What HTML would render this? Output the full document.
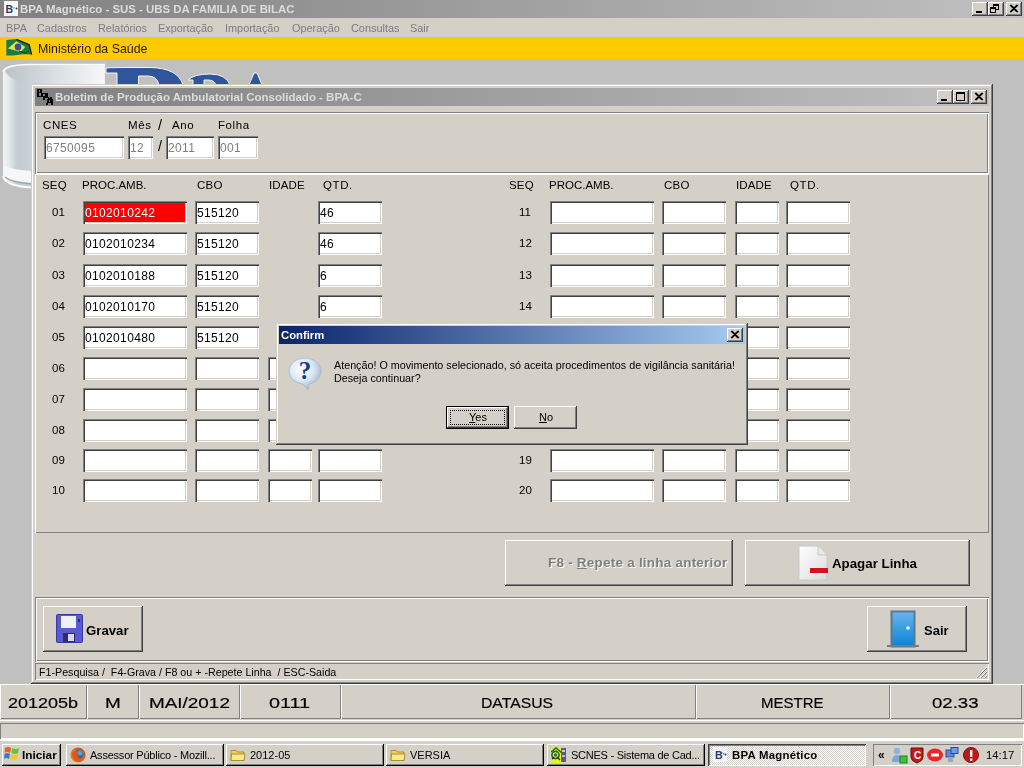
<!DOCTYPE html><html><head><meta charset="utf-8"><style>
*{box-sizing:border-box;margin:0;padding:0}
html,body{width:1024px;height:768px;overflow:hidden}
body{position:relative;background:#c0c0c0;font-family:"Liberation Sans",sans-serif;font-size:11px;color:#000}
.a{position:absolute}
.t{position:absolute;white-space:pre;line-height:1;will-change:transform}
.face{background:#d4d0c8}
.tb{background:linear-gradient(to right,#808080,#c0c0c0)}
.capbtn{position:absolute;width:16px;height:14px;background:#d4d0c8;
  box-shadow:inset -1px -1px 0 #404040, inset 1px 1px 0 #fff, inset -2px -2px 0 #808080, inset 2px 2px 0 #d4d0c8}
.edit{position:absolute;height:23px;background:#fff;
  box-shadow:inset 1px 1px 0 #808080, inset 2px 2px 0 #404040, inset -1px -1px 0 #fff, inset -2px -2px 0 #d4d0c8}
.edit span{position:absolute;left:2px;top:6px;font-size:12px;line-height:1;white-space:pre;letter-spacing:0.35px;will-change:transform}
.lbl{position:absolute;font-size:11.5px;line-height:1;white-space:pre}
.btn{position:absolute;background:#d4d0c8;
  box-shadow:inset -1px -1px 0 #404040, inset 1px 1px 0 #fff, inset -2px -2px 0 #808080}
.etch{position:absolute;box-shadow:inset 1px 1px 0 #808080, inset 2px 2px 0 #fff, inset -1px -1px 0 #fff, inset -2px -2px 0 #808080}
.raise{position:absolute;box-shadow:inset 1px 1px 0 #fff, inset -1px -1px 0 #808080}
.sunk{position:absolute;box-shadow:inset 1px 1px 0 #808080, inset -1px -1px 0 #fff}
</style></head><body>
<div class="a tb" style="left:0;top:0;width:1024px;height:18px"></div>
<svg class="a" style="left:4px;top:1px" width="15" height="16"><rect x="0" y="0" width="14" height="15" fill="#f6f8fb"/><text x="1.5" y="11.5" font-family="Liberation Sans" font-weight="bold" font-size="10.5" fill="#283c6c">B</text><rect x="7" y="5" width="1.2" height="2" fill="#4a5a80"/><rect x="9.5" y="6" width="1.2" height="1.5" fill="#7a8aa8"/><circle cx="12.5" cy="7.5" r="1" fill="#303c58"/></svg>
<div class="t" style="left:20px;top:3.96px;font-size:11.4px;font-weight:bold;color:#dcdcdc;">BPA Magnético - SUS - UBS DA FAMILIA DE BILAC</div>
<div class="capbtn" style="left:972px;top:2px"><div class="a" style="left:4px;top:9px;width:6px;height:2px;background:#000"></div></div>
<div class="capbtn" style="left:988px;top:2px"><div class="a" style="left:5px;top:2px;width:6px;height:6px;border:1px solid #000;border-top-width:2px"></div><div class="a" style="left:2px;top:5px;width:6px;height:6px;border:1px solid #000;border-top-width:2px;background:#d4d0c8"></div></div>
<div class="capbtn" style="left:1006px;top:2px"><svg class="a" style="left:0;top:0" width="16" height="14"><path d="M4 3L11 10M5 3L12 10M11 3L4 10M12 3L5 10" stroke="#000" stroke-width="1.1"/></svg></div>
<div class="a face" style="left:0;top:18px;width:1024px;height:19px"></div>
<div class="t" style="left:6px;top:22.72px;font-size:10.9px;color:#7c7c7c;">BPA</div>
<div class="t" style="left:37px;top:22.72px;font-size:10.9px;color:#7c7c7c;">Cadastros</div>
<div class="t" style="left:98px;top:22.72px;font-size:10.9px;color:#7c7c7c;">Relatórios</div>
<div class="t" style="left:158px;top:22.72px;font-size:10.9px;color:#7c7c7c;">Exportação</div>
<div class="t" style="left:225px;top:22.72px;font-size:10.9px;color:#7c7c7c;">Importação</div>
<div class="t" style="left:292px;top:22.72px;font-size:10.9px;color:#7c7c7c;">Operação</div>
<div class="t" style="left:351px;top:22.72px;font-size:10.9px;color:#7c7c7c;">Consultas</div>
<div class="t" style="left:410px;top:22.72px;font-size:10.9px;color:#7c7c7c;">Sair</div>
<div class="a" style="left:0;top:37px;width:1024px;height:22px;background:#fecb00"></div>
<div class="t" style="left:37.5px;top:43.14px;font-size:12.4px;color:#241a00;">Ministério da Saúde</div>
<svg class="a" style="left:0;top:59px" width="300" height="140"><defs><linearGradient id="cyl" x1="0" x2="1" y1="0" y2="0"><stop offset="0" stop-color="#f2f4f5"/><stop offset="0.06" stop-color="#e4e9ec"/><stop offset="0.14" stop-color="#c2ccd3"/><stop offset="0.3" stop-color="#c8d1d7"/><stop offset="1" stop-color="#eef1f3"/></linearGradient><linearGradient id="cylt" x1="0" x2="1"><stop offset="0" stop-color="#b9c3c9"/><stop offset="0.6" stop-color="#dfe4e7"/><stop offset="1" stop-color="#f6f7f8"/></linearGradient></defs><path d="M3 14 Q3 5 28 5 L105 5 L105 128 L30 127 Q4 126 3 118 Z" fill="url(#cyl)"/><path d="M5 12 Q7 7 28 7 L104 7 L104 40 Q60 34 30 26 Q8 20 5 12Z" fill="url(#cylt)"/><path d="M3 13 Q4 6 28 5.5 L105 5.5" fill="none" stroke="#fafbfb" stroke-width="1.5"/><path d="M4 107 Q14 111 32 112 L105 116 L105 128 Q20 126 4 118 Z" fill="#f5f7f8"/><path d="M5 118 Q12 124 32 125 L105 127" fill="none" stroke="#9ea6aa" stroke-width="1.3"/><path d="M3 117 Q5 127 32 128.5 L105 130" fill="none" stroke="#fdfdfd" stroke-width="1.8"/><path d="M106 9 Q112 8.5 130 8.5 L150 8.5 Q178 9 183 26 L159 26 Q157 17 148 17 L138.5 17 L138.5 26 L117 26 L117 14 L106 14Z" fill="#2f559c" stroke="#f4f4f4" stroke-width="1"/><path d="M188 21 Q194 15 210 15 Q226 15 230 26 L216 26 Q214 21 208 21 L204 21 L204 26 L193 26 L193 21Z" fill="#2f559c" stroke="#f4f4f4" stroke-width="1"/><path d="M254 14 L257 14 L262 26 L249 26Z" fill="#2f559c" stroke="#f4f4f4" stroke-width="1"/></svg>
<div class="a face" style="left:31px;top:84px;width:962px;height:600px;box-shadow:inset -1px -1px 0 #404040, inset 1px 1px 0 #d4d0c8, inset -2px -2px 0 #808080, inset 2px 2px 0 #fff"></div>
<div class="a tb" style="left:35px;top:88px;width:954px;height:18px"></div>
<svg class="a" style="left:33px;top:86px" width="24" height="22" shape-rendering="crispEdges"><path d="M4 3h5v1h-5zM4 4h2v1h-2zM7 4h2v1h-2zM4 5h2v1h-2zM7 5h2v1h-2zM4 6h5v1h-5zM4 7h2v1h-2zM8 7h7v1h-7zM4 8h2v1h-2zM8 8h2v1h-2zM12 8h3v1h-3zM4 9h2v1h-2zM8 9h2v1h-2zM12 9h3v1h-3zM4 10h11v1h-11zM10 11h6v1h-6zM17 11h2v1h-2zM10 12h2v1h-2zM15 12h4v1h-4zM10 13h2v1h-2zM14 13h6v1h-6zM14 14h2v1h-2zM17 14h3v1h-3zM14 15h2v1h-2zM17 15h3v1h-3zM14 16h6v1h-6zM13 17h2v1h-2zM18 17h2v1h-2zM13 18h2v1h-2zM18 18h2v1h-2z" fill="#000"/></svg>
<div class="t" style="left:55px;top:91.65px;font-size:11.5px;font-weight:bold;color:#dcdcdc;">Boletim de Produção Ambulatorial Consolidado - BPA-C</div>
<div class="capbtn" style="left:937px;top:90px"><div class="a" style="left:4px;top:9px;width:6px;height:2px;background:#000"></div></div>
<div class="capbtn" style="left:953px;top:90px"><div class="a" style="left:3px;top:2px;width:9px;height:9px;border:1px solid #000;border-top-width:2px"></div></div>
<div class="capbtn" style="left:971px;top:90px"><svg class="a" style="left:0;top:0" width="16" height="14"><path d="M4 3L11 10M5 3L12 10M11 3L4 10M12 3L5 10" stroke="#000" stroke-width="1.1"/></svg></div>
<div class="etch" style="left:35px;top:112px;width:954px;height:62px"></div>
<div class="t" style="left:42.5px;top:119.65px;font-size:11.5px;color:#000;letter-spacing:0.6px">CNES</div>
<div class="t" style="left:127.5px;top:119.65px;font-size:11.5px;color:#000;letter-spacing:0.6px">Mês</div>
<div class="t" style="left:172px;top:119.65px;font-size:11.5px;color:#000;letter-spacing:0.6px">Ano</div>
<div class="t" style="left:218px;top:119.65px;font-size:11.5px;color:#000;letter-spacing:0.6px">Folha</div>
<div class="t" style="left:158px;top:118.30px;font-size:14.5px;color:#000;">/</div>
<div class="edit" style="left:44px;top:136px;width:80px;height:23px;"><span style="color:#808080">6750095</span></div>
<div class="edit" style="left:128px;top:136px;width:25px;height:23px;"><span style="color:#808080">12</span></div>
<div class="t" style="left:157.5px;top:139.30px;font-size:14.5px;color:#000;">/</div>
<div class="edit" style="left:166px;top:136px;width:48px;height:23px;"><span style="color:#808080">2011</span></div>
<div class="edit" style="left:218px;top:136px;width:40px;height:23px;"><span style="color:#808080">001</span></div>
<div class="raise" style="left:35px;top:174px;width:954px;height:359px"></div>
<div class="t" style="left:42px;top:180.15px;font-size:11.5px;color:#000;letter-spacing:0.2px">SEQ</div>
<div class="t" style="left:82px;top:180.15px;font-size:11.5px;color:#000;letter-spacing:0px">PROC.AMB.</div>
<div class="t" style="left:197px;top:180.15px;font-size:11.5px;color:#000;letter-spacing:0.3px">CBO</div>
<div class="t" style="left:269px;top:180.15px;font-size:11.5px;color:#000;letter-spacing:0.1px">IDADE</div>
<div class="t" style="left:322.5px;top:180.15px;font-size:11.5px;color:#000;letter-spacing:0.6px">QTD.</div>
<div class="t" style="left:509px;top:180.15px;font-size:11.5px;color:#000;letter-spacing:0.2px">SEQ</div>
<div class="t" style="left:549px;top:180.15px;font-size:11.5px;color:#000;letter-spacing:0px">PROC.AMB.</div>
<div class="t" style="left:664px;top:180.15px;font-size:11.5px;color:#000;letter-spacing:0.3px">CBO</div>
<div class="t" style="left:736px;top:180.15px;font-size:11.5px;color:#000;letter-spacing:0.1px">IDADE</div>
<div class="t" style="left:789.5px;top:180.15px;font-size:11.5px;color:#000;letter-spacing:0.6px">QTD.</div>
<div class="t" style="left:52px;top:206.65px;font-size:11.5px;color:#000;">01</div>
<div class="t" style="left:519px;top:206.65px;font-size:11.5px;color:#000;">11</div>
<div class="edit" style="left:83px;top:201px;width:104px;height:23px;background:#f00;"><span style="color:#fff">0102010242</span></div>
<div class="edit" style="left:195px;top:201px;width:64px;height:23px;"><span style="color:#000">515120</span></div>
<div class="edit" style="left:318px;top:201px;width:64px;height:23px;"><span style="color:#000">46</span></div>
<div class="edit" style="left:550px;top:201px;width:104px;height:23px;"></div>
<div class="edit" style="left:662px;top:201px;width:64px;height:23px;"></div>
<div class="edit" style="left:735px;top:201px;width:44px;height:23px;"></div>
<div class="edit" style="left:786px;top:201px;width:64px;height:23px;"></div>
<div class="t" style="left:52px;top:237.65px;font-size:11.5px;color:#000;">02</div>
<div class="t" style="left:519px;top:237.65px;font-size:11.5px;color:#000;">12</div>
<div class="edit" style="left:83px;top:232px;width:104px;height:23px;"><span style="color:#000">0102010234</span></div>
<div class="edit" style="left:195px;top:232px;width:64px;height:23px;"><span style="color:#000">515120</span></div>
<div class="edit" style="left:318px;top:232px;width:64px;height:23px;"><span style="color:#000">46</span></div>
<div class="edit" style="left:550px;top:232px;width:104px;height:23px;"></div>
<div class="edit" style="left:662px;top:232px;width:64px;height:23px;"></div>
<div class="edit" style="left:735px;top:232px;width:44px;height:23px;"></div>
<div class="edit" style="left:786px;top:232px;width:64px;height:23px;"></div>
<div class="t" style="left:52px;top:269.65px;font-size:11.5px;color:#000;">03</div>
<div class="t" style="left:519px;top:269.65px;font-size:11.5px;color:#000;">13</div>
<div class="edit" style="left:83px;top:264px;width:104px;height:23px;"><span style="color:#000">0102010188</span></div>
<div class="edit" style="left:195px;top:264px;width:64px;height:23px;"><span style="color:#000">515120</span></div>
<div class="edit" style="left:318px;top:264px;width:64px;height:23px;"><span style="color:#000">6</span></div>
<div class="edit" style="left:550px;top:264px;width:104px;height:23px;"></div>
<div class="edit" style="left:662px;top:264px;width:64px;height:23px;"></div>
<div class="edit" style="left:735px;top:264px;width:44px;height:23px;"></div>
<div class="edit" style="left:786px;top:264px;width:64px;height:23px;"></div>
<div class="t" style="left:52px;top:300.65px;font-size:11.5px;color:#000;">04</div>
<div class="t" style="left:519px;top:300.65px;font-size:11.5px;color:#000;">14</div>
<div class="edit" style="left:83px;top:295px;width:104px;height:23px;"><span style="color:#000">0102010170</span></div>
<div class="edit" style="left:195px;top:295px;width:64px;height:23px;"><span style="color:#000">515120</span></div>
<div class="edit" style="left:318px;top:295px;width:64px;height:23px;"><span style="color:#000">6</span></div>
<div class="edit" style="left:550px;top:295px;width:104px;height:23px;"></div>
<div class="edit" style="left:662px;top:295px;width:64px;height:23px;"></div>
<div class="edit" style="left:735px;top:295px;width:44px;height:23px;"></div>
<div class="edit" style="left:786px;top:295px;width:64px;height:23px;"></div>
<div class="t" style="left:52px;top:331.65px;font-size:11.5px;color:#000;">05</div>
<div class="t" style="left:519px;top:331.65px;font-size:11.5px;color:#000;">15</div>
<div class="edit" style="left:83px;top:326px;width:104px;height:23px;"><span style="color:#000">0102010480</span></div>
<div class="edit" style="left:195px;top:326px;width:64px;height:23px;"><span style="color:#000">515120</span></div>
<div class="edit" style="left:318px;top:326px;width:64px;height:23px;"></div>
<div class="edit" style="left:550px;top:326px;width:104px;height:23px;"></div>
<div class="edit" style="left:662px;top:326px;width:64px;height:23px;"></div>
<div class="edit" style="left:735px;top:326px;width:44px;height:23px;"></div>
<div class="edit" style="left:786px;top:326px;width:64px;height:23px;"></div>
<div class="t" style="left:52px;top:362.65px;font-size:11.5px;color:#000;">06</div>
<div class="t" style="left:519px;top:362.65px;font-size:11.5px;color:#000;">16</div>
<div class="edit" style="left:83px;top:357px;width:104px;height:23px;"></div>
<div class="edit" style="left:195px;top:357px;width:64px;height:23px;"></div>
<div class="edit" style="left:268px;top:357px;width:44px;height:23px;"></div>
<div class="edit" style="left:318px;top:357px;width:64px;height:23px;"></div>
<div class="edit" style="left:550px;top:357px;width:104px;height:23px;"></div>
<div class="edit" style="left:662px;top:357px;width:64px;height:23px;"></div>
<div class="edit" style="left:735px;top:357px;width:44px;height:23px;"></div>
<div class="edit" style="left:786px;top:357px;width:64px;height:23px;"></div>
<div class="t" style="left:52px;top:393.65px;font-size:11.5px;color:#000;">07</div>
<div class="t" style="left:519px;top:393.65px;font-size:11.5px;color:#000;">17</div>
<div class="edit" style="left:83px;top:388px;width:104px;height:23px;"></div>
<div class="edit" style="left:195px;top:388px;width:64px;height:23px;"></div>
<div class="edit" style="left:268px;top:388px;width:44px;height:23px;"></div>
<div class="edit" style="left:318px;top:388px;width:64px;height:23px;"></div>
<div class="edit" style="left:550px;top:388px;width:104px;height:23px;"></div>
<div class="edit" style="left:662px;top:388px;width:64px;height:23px;"></div>
<div class="edit" style="left:735px;top:388px;width:44px;height:23px;"></div>
<div class="edit" style="left:786px;top:388px;width:64px;height:23px;"></div>
<div class="t" style="left:52px;top:424.65px;font-size:11.5px;color:#000;">08</div>
<div class="t" style="left:519px;top:424.65px;font-size:11.5px;color:#000;">18</div>
<div class="edit" style="left:83px;top:419px;width:104px;height:23px;"></div>
<div class="edit" style="left:195px;top:419px;width:64px;height:23px;"></div>
<div class="edit" style="left:268px;top:419px;width:44px;height:23px;"></div>
<div class="edit" style="left:318px;top:419px;width:64px;height:23px;"></div>
<div class="edit" style="left:550px;top:419px;width:104px;height:23px;"></div>
<div class="edit" style="left:662px;top:419px;width:64px;height:23px;"></div>
<div class="edit" style="left:735px;top:419px;width:44px;height:23px;"></div>
<div class="edit" style="left:786px;top:419px;width:64px;height:23px;"></div>
<div class="t" style="left:52px;top:454.65px;font-size:11.5px;color:#000;">09</div>
<div class="t" style="left:519px;top:454.65px;font-size:11.5px;color:#000;">19</div>
<div class="edit" style="left:83px;top:449px;width:104px;height:23px;"></div>
<div class="edit" style="left:195px;top:449px;width:64px;height:23px;"></div>
<div class="edit" style="left:268px;top:449px;width:44px;height:23px;"></div>
<div class="edit" style="left:318px;top:449px;width:64px;height:23px;"></div>
<div class="edit" style="left:550px;top:449px;width:104px;height:23px;"></div>
<div class="edit" style="left:662px;top:449px;width:64px;height:23px;"></div>
<div class="edit" style="left:735px;top:449px;width:44px;height:23px;"></div>
<div class="edit" style="left:786px;top:449px;width:64px;height:23px;"></div>
<div class="t" style="left:52px;top:484.65px;font-size:11.5px;color:#000;">10</div>
<div class="t" style="left:519px;top:484.65px;font-size:11.5px;color:#000;">20</div>
<div class="edit" style="left:83px;top:479px;width:104px;height:23px;"></div>
<div class="edit" style="left:195px;top:479px;width:64px;height:23px;"></div>
<div class="edit" style="left:268px;top:479px;width:44px;height:23px;"></div>
<div class="edit" style="left:318px;top:479px;width:64px;height:23px;"></div>
<div class="edit" style="left:550px;top:479px;width:104px;height:23px;"></div>
<div class="edit" style="left:662px;top:479px;width:64px;height:23px;"></div>
<div class="edit" style="left:735px;top:479px;width:44px;height:23px;"></div>
<div class="edit" style="left:786px;top:479px;width:64px;height:23px;"></div>
<div class="btn" style="left:505px;top:540px;width:228px;height:46px"></div>
<div class="t" style="left:549px;top:557.41px;font-size:13.5px;font-weight:bold;color:#fff;letter-spacing:0.22px">F8 - Repete a linha anterior</div>
<div class="t" style="left:548px;top:556.41px;font-size:13.5px;font-weight:bold;color:#808080;letter-spacing:0.22px">F8 - <u>R</u>epete a linha anterior</div>
<div class="btn" style="left:745px;top:540px;width:225px;height:46px"></div>
<svg class="a" style="left:797px;top:545px" width="32" height="37"><defs><linearGradient id="doc" x1="0" y1="0" x2="1" y2="1"><stop offset="0" stop-color="#ffffff"/><stop offset="1" stop-color="#dcdcdc"/></linearGradient></defs><path d="M2 1 L21 1 L30 10 L30 35 L2 35 Z" fill="url(#doc)" stroke="#c8c8c8" stroke-width="1"/><path d="M21 1 L21 10 L30 10" fill="#e8e8e8" stroke="#c8c8c8"/><rect x="13" y="23" width="18" height="5" fill="#d2141c"/></svg>
<div class="t" style="left:832px;top:556.94px;font-size:13.3px;font-weight:bold;color:#000;">Apagar Linha</div>
<div class="etch" style="left:35px;top:597px;width:954px;height:65px"></div>
<div class="btn" style="left:43px;top:606px;width:100px;height:46px"></div>
<svg class="a" style="left:56px;top:614px" width="27" height="29"><rect x="0.5" y="0.5" width="26" height="28" rx="1" fill="#5a5ad0" stroke="#3838a0"/><rect x="5" y="2" width="15" height="12" fill="#f0f0fa"/><rect x="7" y="19" width="12" height="9" fill="#2c2c70"/><rect x="12" y="20" width="6" height="7" fill="#d8d8e8"/><rect x="22" y="5" width="2" height="3" fill="#2c2c70"/></svg>
<div class="t" style="left:86px;top:623.95px;font-size:13.2px;font-weight:bold;color:#000;">Gravar</div>
<div class="btn" style="left:867px;top:606px;width:100px;height:46px"></div>
<svg class="a" style="left:886px;top:610px" width="34" height="38"><defs><linearGradient id="door" x1="0" y1="0" x2="0" y2="1"><stop offset="0" stop-color="#6ab4ec"/><stop offset="1" stop-color="#0a84d8"/></linearGradient></defs><rect x="5.5" y="1.5" width="23" height="35" fill="url(#door)" stroke="#5c7890" stroke-width="2"/><rect x="1" y="35" width="32" height="2" fill="#6c7c88"/><circle cx="22" cy="18" r="1.8" fill="#e8f4ff"/></svg>
<div class="t" style="left:924px;top:623.97px;font-size:13px;font-weight:bold;color:#000;">Sair</div>
<div class="sunk" style="left:35px;top:663px;width:954px;height:17px"></div>
<div class="t" style="left:39px;top:667.04px;font-size:10.7px;color:#000;">F1-Pesquisa /  F4-Grava / F8 ou + -Repete Linha  / ESC-Saida</div>
<svg class="a" style="left:975px;top:666px" width="13" height="13"><path d="M12 1L1 12M12 5L5 12M12 9L9 12" stroke="#fff" stroke-width="1"/><path d="M12 2L2 12M12 6L6 12M12 10L10 12" stroke="#808080" stroke-width="1"/></svg>
<div class="a face" style="left:276px;top:323px;width:472px;height:122px;box-shadow:inset -1px -1px 0 #404040, inset 1px 1px 0 #d4d0c8, inset -2px -2px 0 #808080, inset 2px 2px 0 #fff"></div>
<div class="a" style="left:279px;top:326px;width:466px;height:18px;background:linear-gradient(to right,#0a246a,#a6caf0)"></div>
<div class="t" style="left:281px;top:329.87px;font-size:11.3px;font-weight:bold;color:#fff;">Confirm</div>
<div class="capbtn" style="left:727px;top:328px"><svg class="a" style="left:0;top:0" width="16" height="14"><path d="M4 3L11 10M5 3L12 10M11 3L4 10M12 3L5 10" stroke="#000" stroke-width="1.1"/></svg></div>
<svg class="a" style="left:288px;top:357px" width="34" height="34"><defs><radialGradient id="qb" cx="0.4" cy="0.35" r="0.7"><stop offset="0" stop-color="#ffffff"/><stop offset="0.5" stop-color="#dce9f6"/><stop offset="0.85" stop-color="#aec2d6"/><stop offset="1" stop-color="#8098b0"/></radialGradient></defs><path d="M17 1 C26 1 33 7 33 14 C33 21 27 26 21 27 L20 33 L15 27 C7 26 1 21 1 14 C1 7 8 1 17 1Z" fill="url(#qb)" stroke="#a8b8c8" stroke-width="0.8"/><text x="17" y="22" text-anchor="middle" font-family="Liberation Serif" font-weight="bold" font-size="25" fill="#1a3a8a">?</text></svg>
<div class="t" style="left:334px;top:359.74px;font-size:10.75px;color:#000;">Atenção! O movimento selecionado, só aceita procedimentos de vigilância sanitária!</div>
<div class="t" style="left:334px;top:373.04px;font-size:10.75px;color:#000;">Deseja continuar?</div>
<div class="a" style="left:446px;top:406px;width:63px;height:23px;background:#d4d0c8;box-shadow:inset 0 0 0 1px #000, inset -2px -2px 0 #404040, inset 2px 2px 0 #fff, inset -3px -3px 0 #808080"></div>
<div class="a" style="left:450px;top:410px;width:55px;height:15px;border:1px dotted #000"></div>
<div class="t" style="left:469px;top:412.21px;font-size:11px;color:#000;"><u>Y</u>es</div>
<div class="btn" style="left:514px;top:406px;width:63px;height:23px"></div>
<div class="t" style="left:539px;top:412.21px;font-size:11px;color:#000;"><u>N</u>o</div>
<div class="a face" style="left:0;top:684px;width:1024px;height:35px;box-shadow:inset 0 1px 0 #fff"></div>
<div class="a" style="left:0px;top:685px;width:87px;height:34px;box-shadow:inset 1px 0 0 #fff, inset -1px -1px 0 #808080;"></div>
<div class="t" style="left:8.4px;top:695.44px;font-size:15px;color:#000;transform:scaleX(1.2);transform-origin:0 0;-webkit-text-stroke:0.2px #000">201205b</div>
<div class="a" style="left:87px;top:685px;width:52px;height:34px;box-shadow:inset 1px 0 0 #fff, inset -1px -1px 0 #808080;"></div>
<div class="t" style="left:104.8px;top:695.44px;font-size:15px;color:#000;transform:scaleX(1.26);transform-origin:0 0;-webkit-text-stroke:0.2px #000">M</div>
<div class="a" style="left:139px;top:685px;width:101px;height:34px;box-shadow:inset 1px 0 0 #fff, inset -1px -1px 0 #808080;"></div>
<div class="t" style="left:148.8px;top:695.44px;font-size:15px;color:#000;transform:scaleX(1.26);transform-origin:0 0;-webkit-text-stroke:0.2px #000">MAI/2012</div>
<div class="a" style="left:240px;top:685px;width:101px;height:34px;box-shadow:inset 1px 0 0 #fff, inset -1px -1px 0 #808080;"></div>
<div class="t" style="left:268.8px;top:695.44px;font-size:15px;color:#000;transform:scaleX(1.32);transform-origin:0 0;-webkit-text-stroke:0.2px #000">0111</div>
<div class="a" style="left:341px;top:685px;width:355px;height:34px;box-shadow:inset 1px 0 0 #fff, inset -1px -1px 0 #808080;"></div>
<div class="t" style="left:480.7px;top:695.44px;font-size:15px;color:#000;transform:scaleX(1.05);transform-origin:0 0;-webkit-text-stroke:0.2px #000">DATASUS</div>
<div class="a" style="left:696px;top:685px;width:194px;height:34px;box-shadow:inset 1px 0 0 #fff, inset -1px -1px 0 #808080;"></div>
<div class="t" style="left:760.6px;top:695.44px;font-size:15px;color:#000;transform:scaleX(1.0);transform-origin:0 0;-webkit-text-stroke:0.2px #000">MESTRE</div>
<div class="a" style="left:890px;top:685px;width:132px;height:34px;box-shadow:inset 1px 0 0 #fff, inset -1px -1px 0 #808080;"></div>
<div class="t" style="left:931.8px;top:695.44px;font-size:15px;color:#000;transform:scaleX(1.24);transform-origin:0 0;-webkit-text-stroke:0.2px #000">02.33</div>
<div class="a face" style="left:0;top:719px;width:1024px;height:20px"></div>
<div class="a" style="left:0;top:720px;width:1024px;height:1px;background:#fff"></div>
<div class="a" style="left:0;top:723px;width:1024px;height:16px;box-shadow:inset 1px 1px 0 #808080, inset -1px -1px 0 #fff"></div>
<div class="a face" style="left:0;top:739px;width:1024px;height:29px;box-shadow:inset 0 2px 0 #fff, inset 0 1px 0 #d4d0c8"></div>
<div class="a" style="left:2px;top:744px;width:59px;height:22px;background:#d4d0c8;box-shadow:inset -1px -1px 0 #000, inset 1px 1px 0 #fff, inset -2px -2px 0 #808080"></div>
<svg class="a" style="left:4px;top:746px" width="16" height="15"><path d="M1 2 Q4 0 7 2 L6 7 Q3 5 0.5 7Z" fill="#e8602a"/><path d="M8 2 Q11 4 15 2 L14 7 Q11 9 7.5 7Z" fill="#6cc040"/><path d="M0.5 8 Q3 6 6 8 L5 13 Q2 11 0 13Z" fill="#3a78d8"/><path d="M7 8 Q10 10 14 8 L13 13 Q10 15 6 13Z" fill="#f4c81a"/></svg>
<div class="t" style="left:22px;top:749.61px;font-size:11.8px;font-weight:bold;color:#000;">Iniciar</div>
<div class="a" style="left:66px;top:744px;width:158px;height:22px;background:#d4d0c8;box-shadow:inset -1px -1px 0 #000, inset 1px 1px 0 #fff, inset -2px -2px 0 #808080"></div>
<svg class="a" style="left:70px;top:747px" width="16" height="16"><defs><radialGradient id="ffb" cx="0.6" cy="0.4" r="0.5"><stop offset="0" stop-color="#7ab8e8"/><stop offset="1" stop-color="#1a5aa8"/></radialGradient><radialGradient id="ffo" cx="0.4" cy="0.6" r="0.6"><stop offset="0" stop-color="#f8c030"/><stop offset="1" stop-color="#d84a10"/></radialGradient></defs><circle cx="8" cy="8" r="7.5" fill="url(#ffo)"/><circle cx="9" cy="7" r="4.5" fill="url(#ffb)"/><path d="M2 6 Q5 3 8 5 Q6 8 9 11 Q12 12 14 9 Q13 14 8 15 Q2 14 2 6Z" fill="#e05a10"/></svg>
<div class="t" style="left:90px;top:749.91px;font-size:11px;color:#000;letter-spacing:-0.22px">Assessor Público - Mozill...</div>
<div class="a" style="left:226px;top:744px;width:158px;height:22px;background:#d4d0c8;box-shadow:inset -1px -1px 0 #000, inset 1px 1px 0 #fff, inset -2px -2px 0 #808080"></div>
<svg class="a" style="left:230px;top:747px" width="16" height="16"><path d="M1 3.5 L6 3.5 L7.5 5 L14 5 L14 13.5 L1 13.5Z" fill="#f0d060" stroke="#b09020"/><path d="M1.5 7 L15 7 L14 13.5 L1 13.5Z" fill="#fce890" stroke="#b09020"/></svg>
<div class="t" style="left:250px;top:749.91px;font-size:11px;color:#000;letter-spacing:0px">2012-05</div>
<div class="a" style="left:386px;top:744px;width:158px;height:22px;background:#d4d0c8;box-shadow:inset -1px -1px 0 #000, inset 1px 1px 0 #fff, inset -2px -2px 0 #808080"></div>
<svg class="a" style="left:390px;top:747px" width="16" height="16"><path d="M1 3.5 L6 3.5 L7.5 5 L14 5 L14 13.5 L1 13.5Z" fill="#f0d060" stroke="#b09020"/><path d="M1.5 7 L15 7 L14 13.5 L1 13.5Z" fill="#fce890" stroke="#b09020"/></svg>
<div class="t" style="left:410px;top:749.91px;font-size:11px;color:#000;letter-spacing:0px">VERSIA</div>
<div class="a" style="left:547px;top:744px;width:158px;height:22px;background:#d4d0c8;box-shadow:inset -1px -1px 0 #000, inset 1px 1px 0 #fff, inset -2px -2px 0 #808080"></div>
<svg class="a" style="left:551px;top:747px" width="16" height="16"><rect x="0" y="1" width="11" height="15" fill="#f0f020"/><path d="M0 5 L5 1 L11 6" fill="none" stroke="#206a20" stroke-width="1.6"/><circle cx="4.5" cy="8" r="3.6" fill="none" stroke="#1a6a1a" stroke-width="1.6"/><circle cx="4.5" cy="8" r="1.8" fill="#4a5aa0"/><path d="M1 12 L3 10 M6 10 L9 13" stroke="#103a10" stroke-width="1.4"/><rect x="10" y="1" width="5" height="14" fill="#5a5a8a"/><rect x="11" y="3" width="3" height="2" fill="#c8c8e0"/><rect x="11" y="8" width="3" height="2" fill="#a8c8a8"/></svg>
<div class="t" style="left:571px;top:749.91px;font-size:11px;color:#000;letter-spacing:-0.25px">SCNES - Sistema de Cad...</div>
<div class="a" style="left:708px;top:744px;width:158px;height:22px;background-color:#e8e6e2;background-image:repeating-conic-gradient(#fff 0 25%, #d4d0c8 0 50%);background-size:2px 2px;box-shadow:inset 1px 1px 0 #404040, inset -1px -1px 0 #fff, inset 2px 2px 0 #808080"></div>
<svg class="a" style="left:712px;top:747px" width="16" height="16"><rect x="1" y="0" width="14" height="15" fill="#f0f2f6"/><text x="3" y="11.5" font-family="Liberation Sans" font-weight="bold" font-size="10.5" fill="#283c6c">B</text><rect x="9" y="5" width="1.2" height="2" fill="#4a5a80"/><rect x="11" y="6" width="1.2" height="1.5" fill="#7a8aa8"/><circle cx="13.5" cy="7.5" r="1" fill="#303c58"/></svg>
<div class="t" style="left:732px;top:749.86px;font-size:11.4px;font-weight:bold;color:#000;letter-spacing:0.25px">BPA Magnético</div>
<div class="a" style="left:873px;top:744px;width:149px;height:22px;box-shadow:inset 1px 1px 0 #808080, inset -1px -1px 0 #fff"></div>
<div class="t" style="left:878px;top:748.59px;font-size:12px;font-weight:bold;color:#000;">«</div>
<svg class="a" style="left:891px;top:747px" width="90" height="17"><circle cx="6" cy="4" r="3.2" fill="#8ab4e0"/><path d="M1 15 Q1 8 6 8 Q11 8 11 15Z" fill="#7aa6d8"/><rect x="9" y="9" width="7" height="7" fill="#40c040" stroke="#208020"/><path d="M20 1 L32 1 L32 10 Q32 14 26 16 Q20 14 20 10Z" fill="#c81818" stroke="#601010"/><text x="23" y="12" font-family="Liberation Sans" font-weight="bold" font-size="10" fill="#fff">C</text><ellipse cx="44" cy="8" rx="8" ry="6.5" fill="#e82828"/><rect x="40" y="6.5" width="8" height="3" fill="#fff"/><rect x="55" y="3" width="8" height="7" fill="#5a8ad8" stroke="#2a4a98"/><rect x="60" y="0.5" width="7" height="6" fill="#6a9ae8" stroke="#2a4a98"/><rect x="57" y="10" width="5" height="5" fill="#9ab" /><circle cx="80" cy="8" r="7.5" fill="#c01818" stroke="#801010"/><rect x="79" y="3" width="2.4" height="7" fill="#fff"/><rect x="79" y="11.5" width="2.4" height="2.4" fill="#fff"/></svg>
<div class="t" style="left:986px;top:749.97px;font-size:11.3px;color:#000;">14:17</div>
<svg class="a" style="left:5px;top:39px" width="28" height="18"><path d="M1.3 1 L11.3 0 L24.2 5.3 L26.6 15.6 L18.6 15.3 L8 16.6 L1.3 16.6Z" fill="#1c7a48"/><path d="M11.3 0.3 L24.2 5.6 L26.6 15.6" fill="none" stroke="#0c2c14" stroke-width="1.3"/><path d="M3 9.6 L11.3 2.3 L20.3 8 L15.6 13Z" fill="#e0e840"/><circle cx="13" cy="8" r="3.4" fill="#3a4aa8"/><path d="M14 12 L20 14 L24 12" fill="none" stroke="#0c3a1c" stroke-width="1"/></svg>
</body></html>
